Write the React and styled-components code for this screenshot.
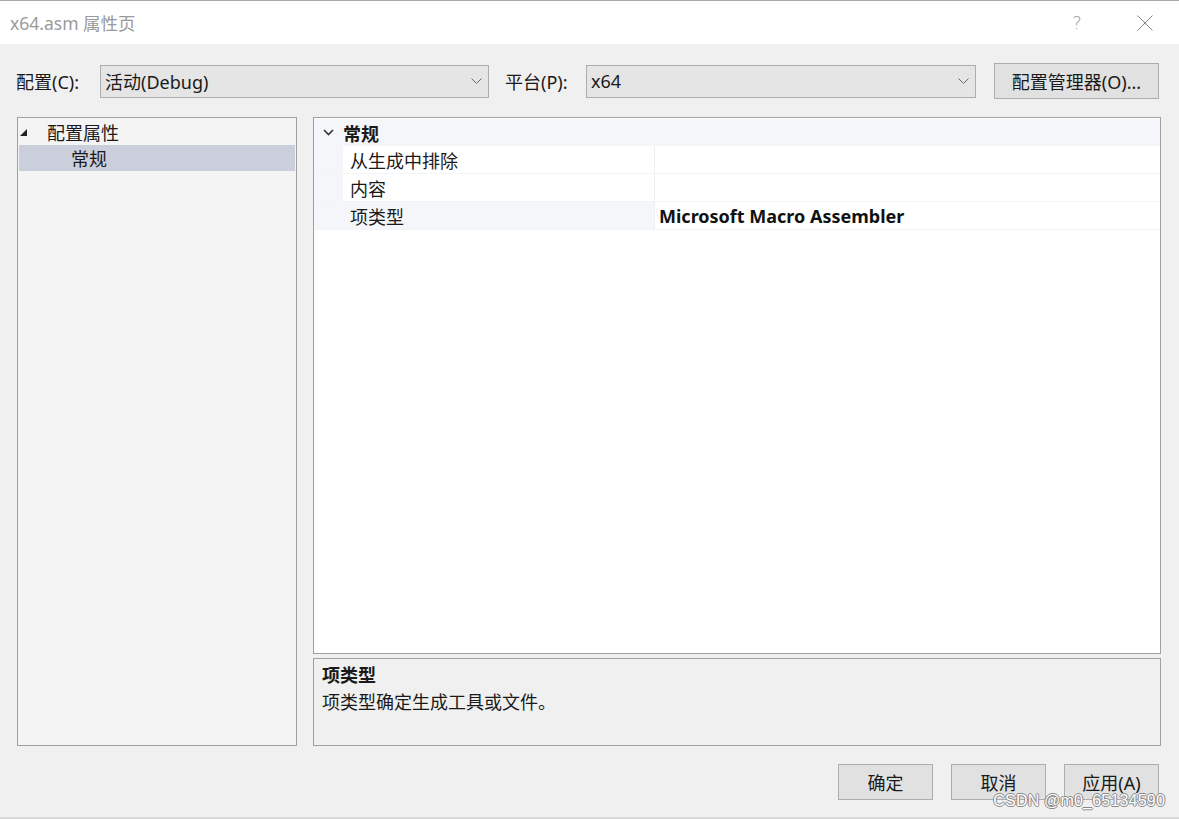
import React from 'react';
import styled, { createGlobalStyle } from 'styled-components';

const GlobalStyle = createGlobalStyle`
  html, body { margin: 0; padding: 0; }
  body {
    font-family: "Noto Sans", "Noto Sans CJK SC", "Liberation Sans", sans-serif;
    font-size: 18px;
    color: #1a1a1a;
  }
`;

const Window = styled.div`
  position: relative;
  width: 1179px;
  height: 819px;
  display: flex;
  flex-direction: column;
  background: #f0f0f0;
  overflow: hidden;
  border-bottom: 2px solid #d8d8d8;
  box-sizing: border-box;
`;

const TitleBar = styled.div`
  height: 44px;
  flex: none;
  display: flex;
  align-items: center;
  background: #fff;
  border-top: 1px solid #a8a8a8;
  box-sizing: border-box;
  padding: 0 0 0 10px;
`;

const Title = styled.div`
  flex: 1;
  color: #9a9a9a;
  font-size: 17.5px;
`;

const TitleButton = styled.div`
  width: 68px;
  height: 44px;
  display: flex;
  align-items: center;
  justify-content: center;
  color: #9a9a9a;
  font-size: 18px;
  font-family: "DejaVu Sans", sans-serif;
  font-weight: 200;
`;

const Body = styled.div`
  flex: 1;
  display: flex;
  flex-direction: column;
  padding: 20px 18px 0 16px;
`;

const ConfigRow = styled.div`
  height: 34px;
  display: flex;
  align-items: center;
`;

const Label = styled.div`
  width: ${p => p.$w}px;
  flex: none;
  white-space: nowrap;
`;

const Select = styled.div`
  width: ${p => p.$w}px;
  height: 33px;
  box-sizing: border-box;
  background: #e5e5e5;
  border: 1px solid #adadad;
  display: flex;
  align-items: center;
  padding: 0 6px 0 4px;
  margin-right: ${p => p.$mr}px;
  span { flex: 1; }
`;

const Button = styled.div`
  width: ${p => p.$w || 95}px;
  height: 36px;
  box-sizing: border-box;
  background: #e1e1e1;
  border: 1px solid #adadad;
  display: flex;
  align-items: center;
  justify-content: center;
  flex: none;
  white-space: nowrap;
`;

const Main = styled.div`
  margin-top: 19px;
  margin-left: 1px;
  height: 629px;
  display: flex;
  gap: 16px;
`;

const TreePanel = styled.div`
  width: 280px;
  box-sizing: border-box;
  background: #f4f4f4;
  border: 1px solid #a0a0a0;
  padding: 1px;
`;

const TreeRow = styled.div`
  height: 26px;
  display: flex;
  align-items: center;
  padding-left: ${p => p.$indent}px;
  background: ${p => (p.$selected ? '#cbcfdb' : 'transparent')};
  gap: 19px;
`;

const RightCol = styled.div`
  flex: 1;
  display: flex;
  flex-direction: column;
  gap: 4px;
`;

const Grid = styled.div`
  flex: 1;
  background: #fff;
  border: 1px solid #a0a0a0;
  padding: 1px 0 0 0;
`;

const CategoryRow = styled.div`
  height: 27px;
  display: flex;
  align-items: center;
  background: #f4f6fa;
  font-weight: bold;
`;

const Gutter = styled.div`
  width: 29px;
  flex: none;
  align-self: stretch;
  display: flex;
  align-items: center;
  justify-content: center;
  background: #f4f6fa;
`;

const PropRow = styled.div`
  height: 27px;
  display: flex;
  border-bottom: 1px solid #f3f4f7;
`;

const NameCell = styled.div`
  width: 312px;
  flex: none;
  display: flex;
  align-items: center;
  padding-left: 7px;
  box-sizing: border-box;
  background: ${p => (p.$selected ? '#f4f6fa' : '#fff')};
  border-right: 1px solid #eef0f4;
`;

const ValueCell = styled.div`
  flex: 1;
  display: flex;
  align-items: center;
  padding-left: 4px;
  font-weight: bold;
  font-size: 18px;
  color: #111;
`;

const Description = styled.div`
  height: 88px;
  box-sizing: border-box;
  border: 1px solid #a0a0a0;
  padding: 3px 8px;
  line-height: 27px;
  b { display: block; }
`;

const Footer = styled.div`
  height: 72px;
  display: flex;
  justify-content: flex-end;
  align-items: flex-start;
  padding-top: 18px;
  padding-right: 2px;
  gap: 18px;
  box-sizing: border-box;
`;

const Watermark = styled.div`
  position: absolute;
  right: 14px;
  bottom: 7px;
  font-family: "Liberation Sans", sans-serif;
  font-size: 16px;
  color: #fff;
  letter-spacing: 0.2px;
  text-shadow: -1px 0 #888, 1px 0 #888, 0 -1px #888, 0 1px #888;
`;

const Chevron = () => (
  <svg width="11" height="7" viewBox="0 0 11 7">
    <polyline points="0.5,0.5 5.5,5.5 10.5,0.5" fill="none" stroke="#666" strokeWidth="1" />
  </svg>
);

export default function App() {
  return (
    <Window>
      <GlobalStyle />
      <TitleBar>
        <Title>x64.asm 属性页</Title>
        <TitleButton>?</TitleButton>
        <TitleButton>
          <svg width="16" height="16" viewBox="0 0 16 16">
            <path d="M0.5 0.5 L15.5 15.5 M15.5 0.5 L0.5 15.5" stroke="#888" strokeWidth="1" />
          </svg>
        </TitleButton>
      </TitleBar>
      <Body>
        <ConfigRow>
          <Label $w={84}>配置(C):</Label>
          <Select $w={389} $mr={16}>
            <span>活动(Debug)</span>
            <Chevron />
          </Select>
          <Label $w={81}>平台(P):</Label>
          <Select $w={390} $mr={18}>
            <span>x64</span>
            <Chevron />
          </Select>
          <Button $w={165}>配置管理器(O)...</Button>
        </ConfigRow>
        <Main>
          <TreePanel>
            <TreeRow $indent={0}>
              <svg width="9" height="9" viewBox="0 0 9 9">
                <polygon points="8,1 8,8 1,8" fill="#222" />
              </svg>
              配置属性
            </TreeRow>
            <TreeRow $indent={52} $selected>常规</TreeRow>
          </TreePanel>
          <RightCol>
            <Grid>
              <CategoryRow>
                <Gutter>
                  <svg width="11" height="7" viewBox="0 0 11 7">
                    <polyline points="1,1 5.5,5.5 10,1" fill="none" stroke="#333" strokeWidth="1.6" />
                  </svg>
                </Gutter>
                常规
              </CategoryRow>
              <PropRow>
                <Gutter />
                <NameCell>从生成中排除</NameCell>
                <ValueCell />
              </PropRow>
              <PropRow>
                <Gutter />
                <NameCell>内容</NameCell>
                <ValueCell />
              </PropRow>
              <PropRow>
                <Gutter />
                <NameCell $selected>项类型</NameCell>
                <ValueCell>Microsoft Macro Assembler</ValueCell>
              </PropRow>
            </Grid>
            <Description>
              <b>项类型</b>
              项类型确定生成工具或文件。
            </Description>
          </RightCol>
        </Main>
        <Footer>
          <Button>确定</Button>
          <Button>取消</Button>
          <Button>应用(A)</Button>
        </Footer>
      </Body>
      <Watermark>CSDN @m0_65134590</Watermark>
    </Window>
  );
}
